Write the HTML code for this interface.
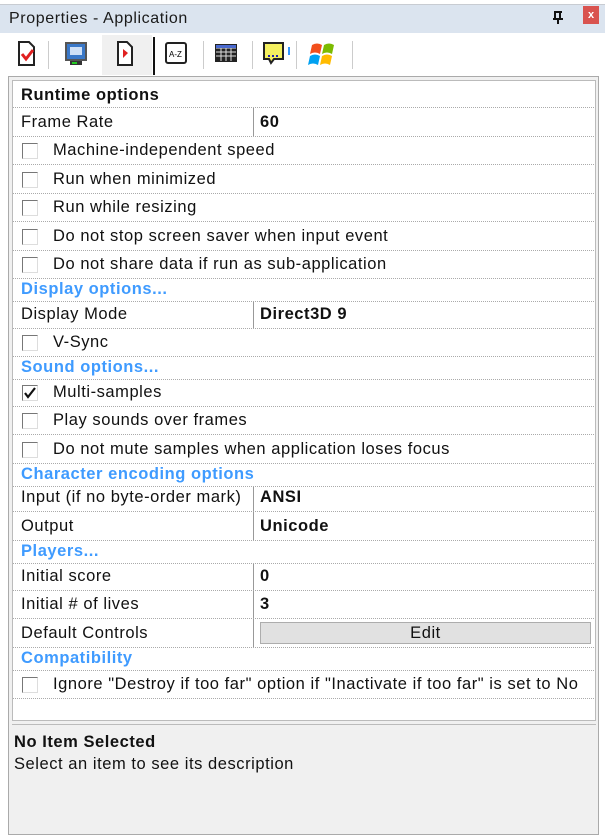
<!DOCTYPE html>
<html><head><meta charset="utf-8"><style>
*{box-sizing:border-box;margin:0;padding:0}
body{width:605px;height:839px;background:#fff;font-family:"Liberation Sans",sans-serif;font-size:16.5px;letter-spacing:0.55px;color:#111;position:relative;overflow:hidden}
.abs{position:absolute}
.title{left:0;top:4px;width:605px;height:29px;background:#dbe4ef;border-top:1px solid #c8ccd2}
.title span{position:absolute;left:9px;top:5px;font-size:16px;letter-spacing:0.6px;color:#1a1a1a}
.close{right:6px;top:6px;width:16px;height:18px;background:#d9534f;color:#fff;font-size:11px;font-weight:bold;text-align:center;line-height:18px;letter-spacing:0}
.tb{left:0;top:33px;width:605px;height:43px;background:#fff}
.sep{position:absolute;top:8px;width:1px;height:28px;background:#ccc}
.frame{left:8px;top:76px;width:591px;height:759px;background:#f0f0f0;border:1px solid #aaa}
.grid{left:12px;top:80px;width:584px;height:641px;background:#fff;border:1px solid #bbb}
.row{position:absolute;left:13px;width:582px;background-image:linear-gradient(to right,#aaa 50%,transparent 50%);background-size:2px 1px;background-repeat:repeat-x;background-position:bottom left}
.row .l{position:absolute;left:8px;bottom:5px;white-space:nowrap}
.row .v{position:absolute;left:247px;bottom:5px;font-weight:bold}
.row .d{position:absolute;left:240px;top:0;bottom:1px;border-left:1px solid #999}
.sec .l{color:#3f9bff;font-weight:bold;bottom:3px}
.cb{position:absolute;left:9px;bottom:6px;width:16px;height:16px;border:1px solid #777;border-right-color:#ddd;border-bottom-color:#ddd;background:#fff}
.cbt{left:40px!important}
.desc{left:12px;top:724px;width:584px;height:108px;background:#f0f0f0;border-top:1px solid #bbb}
</style></head><body>
<div class="abs" style="left:0;top:0;width:605px;height:4px;background:#fff"></div>
<div class="abs title"><span>Properties - Application</span></div>
<svg class="abs" style="left:551px;top:10px" width="14" height="14"><path d="M3 2h8M4 2v7M9 2v7M2 9h10M7 9v5" stroke="#111" stroke-width="2" fill="none"/></svg>
<div class="abs close">x</div>
<div class="abs tb">
 <svg width="360" height="43" style="position:absolute;left:0;top:0">
  <rect x="102" y="2" width="50" height="40" fill="#f0f0f0"/>
  <path d="M19 9h10l5 5v18h-15z" fill="#fff" stroke="#222" stroke-width="2"/>
  <path d="M22 21l4 5 7-9" stroke="#e02020" stroke-width="3" fill="none"/>
  <rect x="66" y="10" width="20" height="17" fill="#3a78c8" stroke="#555" stroke-width="2"/>
  <rect x="70" y="14" width="12" height="8" fill="#cfe0f6"/>
  <rect x="70" y="28" width="12" height="4" fill="#333"/><rect x="72" y="29" width="5" height="2" fill="#2c2"/>
  <path d="M118 9h9l5 5v18h-14z" fill="#fff" stroke="#222" stroke-width="2"/>
  <path d="M123 16l5 4-5 5z" fill="#e02020"/>
  <rect x="153" y="4" width="2" height="38" fill="#111"/>
  <rect x="166" y="10" width="20" height="20" rx="2" fill="#fff" stroke="#222" stroke-width="2"/>
  <text x="169" y="24" font-size="8" font-family="Liberation Sans" letter-spacing="0">A-Z</text>
  <rect x="215" y="11" width="22" height="18" fill="#222"/>
  <path d="M216 15h20M216 19h20M216 23h20M221 12v16M226 12v16M231 12v16" stroke="#ddd" stroke-width="1"/>
  <rect x="216" y="12" width="20" height="3" fill="#4a6ad0"/>
  <path d="M264 10h19v16h-9l-3 4-2-4h-5z" fill="#f4f060" stroke="#222" stroke-width="2"/>
  <path d="M268 23h2M272 23h2M276 23h2" stroke="#22a" stroke-width="2"/>
  <rect x="288" y="14" width="2" height="8" fill="#39f"/>
  <path d="M312 12q5-3 10 0l-2 9q-5-3-10 0z" fill="#f24f1c"/>
  <path d="M324 12q5-3 10 0l-2 9q-5-3-10 0z" fill="#7cbb00"/>
  <path d="M310 23q5-3 10 0l-2 9q-5-3-10 0z" fill="#00a1f1"/>
  <path d="M322 23q5-3 10 0l-2 9q-5-3-10 0z" fill="#ffbb00"/>
 </svg>
 <div class="sep" style="left:48px"></div><div class="sep" style="left:203px"></div><div class="sep" style="left:252px"></div><div class="sep" style="left:296px"></div><div class="sep" style="left:352px"></div>
</div>
<div class="abs frame"></div>
<div class="abs grid"></div>

<div class="row" style="top:84px;height:24px"><span class="l" style="font-weight:bold;bottom:3px">Runtime options</span></div>
<div class="row" style="top:108px;height:29px"><span class="l">Frame Rate</span><span class="d"></span><span class="v">60</span></div>
<div class="row" style="top:137px;height:28px"><span class="cb"></span><span class="l cbt">Machine-independent speed</span></div>
<div class="row" style="top:165px;height:29px"><span class="cb"></span><span class="l cbt">Run when minimized</span></div>
<div class="row" style="top:194px;height:28px"><span class="cb"></span><span class="l cbt">Run while resizing</span></div>
<div class="row" style="top:222px;height:29px"><span class="cb"></span><span class="l cbt">Do not stop screen saver when input event</span></div>
<div class="row" style="top:251px;height:28px"><span class="cb"></span><span class="l cbt">Do not share data if run as sub-application</span></div>
<div class="row sec" style="top:279px;height:23px"><span class="l">Display options...</span></div>
<div class="row" style="top:302px;height:27px"><span class="l">Display Mode</span><span class="d"></span><span class="v">Direct3D 9</span></div>
<div class="row" style="top:329px;height:28px"><span class="cb"></span><span class="l cbt">V-Sync</span></div>
<div class="row sec" style="top:357px;height:23px"><span class="l">Sound options...</span></div>
<div class="row" style="top:380px;height:27px"><span class="cb"><svg width="14" height="14" style="position:absolute;left:0;top:0"><path d="M2 7l3 4 7-9" stroke="#111" stroke-width="2.2" fill="none"/></svg></span><span class="l cbt">Multi-samples</span></div>
<div class="row" style="top:407px;height:28px"><span class="cb"></span><span class="l cbt">Play sounds over frames</span></div>
<div class="row" style="top:435px;height:29px"><span class="cb"></span><span class="l cbt">Do not mute samples when application loses focus</span></div>
<div class="row sec" style="top:464px;height:23px"><span class="l">Character encoding options</span></div>
<div class="row" style="top:487px;height:25px"><span class="l">Input (if no byte-order mark)</span><span class="d"></span><span class="v">ANSI</span></div>
<div class="row" style="top:512px;height:29px"><span class="l">Output</span><span class="d"></span><span class="v">Unicode</span></div>
<div class="row sec" style="top:541px;height:23px"><span class="l">Players...</span></div>
<div class="row" style="top:564px;height:27px"><span class="l">Initial score</span><span class="d"></span><span class="v">0</span></div>
<div class="row" style="top:591px;height:28px"><span class="l">Initial # of lives</span><span class="d"></span><span class="v">3</span></div>
<div class="row" style="top:619px;height:29px"><span class="l">Default Controls</span><span class="d"></span>
 <div style="position:absolute;left:247px;top:3px;width:331px;height:22px;background:#e1e1e1;border:1px solid #adadad;text-align:center;line-height:20px">Edit</div></div>
<div class="row sec" style="top:648px;height:23px"><span class="l">Compatibility</span></div>
<div class="row" style="top:671px;height:28px"><span class="cb"></span><span class="l cbt">Ignore "Destroy if too far" option if "Inactivate if too far" is set to No</span></div>

<div class="abs desc">
 <div style="position:absolute;left:2px;top:8px;font-weight:bold">No Item Selected</div>
 <div style="position:absolute;left:2px;top:30px">Select an item to see its description</div>
</div>
</body></html>
